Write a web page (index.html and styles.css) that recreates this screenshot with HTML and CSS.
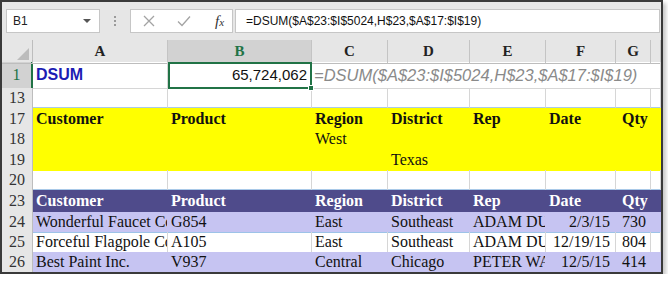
FILE: index.html
```html
<!DOCTYPE html>
<html lang="en">
  <head>
    <meta charset="UTF-8" />
    <title>DSUM</title>
    <link rel="stylesheet" href="styles.css">
  </head>
  <body>
    <div class="frame">
      <div class="fbar">
        <div class="namebox">
          <span>B1</span>
          <span class="caret"></span>
        </div>
        <div class="grip"><i></i><i></i><i></i></div>
        <div class="actions">
          <svg width="12" height="12" viewBox="0 0 12 12"><path d="M1 1 L11 11 M11 1 L1 11" stroke="#a3a3a3" stroke-width="1.3" fill="none"/></svg>
          <svg width="14" height="12" viewBox="0 0 14 12"><path d="M1 6.5 L5 10.5 L13 1.5" stroke="#a3a3a3" stroke-width="1.3" fill="none"/></svg>
          <span class="fx">f<small>x</small></span>
        </div>
        <div class="formula">=DSUM($A$23:$I$5024,H$23,$A$17:$I$19)</div>
      </div>

      <div class="sheet">
        <div class="row colhead">
          <div class="corner"></div>
          <div class="ch">A</div>
          <div class="ch on">B</div>
          <div class="ch">C</div>
          <div class="ch">D</div>
          <div class="ch">E</div>
          <div class="ch">F</div>
          <div class="ch">G</div>
          <div class="ch"></div>
        </div>

        <div class="row r1">
          <div class="rh on">1</div>
          <div class="c dsum">DSUM</div>
          <div class="c sel">65,724,062<span class="handle"></span></div>
          <div class="c ftext">=DSUM($A$23:$I$5024,H$23,$A$17:$I$19)</div>
          <div class="c open"></div>
          <div class="c open"></div>
          <div class="c open"></div>
          <div class="c open"></div>
          <div class="c"></div>
        </div>

        <div class="row h20 gap">
          <div class="rh">13</div>
          <div class="c"></div><div class="c"></div><div class="c"></div><div class="c"></div>
          <div class="c"></div><div class="c"></div><div class="c"></div><div class="c"></div>
        </div>

        <div class="row h21 yellow">
          <div class="rh">17</div>
          <div class="c b">Customer</div>
          <div class="c b">Product</div>
          <div class="c b">Region</div>
          <div class="c b">District</div>
          <div class="c b">Rep</div>
          <div class="c b">Date</div>
          <div class="c b qty">Qty</div>
          <div class="c"></div>
        </div>
        <div class="row h20 yellow">
          <div class="rh">18</div>
          <div class="c"></div><div class="c"></div>
          <div class="c">West</div>
          <div class="c"></div><div class="c"></div><div class="c"></div><div class="c"></div><div class="c"></div>
        </div>
        <div class="row h21 yellow">
          <div class="rh">19</div>
          <div class="c"></div><div class="c"></div><div class="c"></div>
          <div class="c">Texas</div>
          <div class="c"></div><div class="c"></div><div class="c"></div><div class="c"></div>
        </div>

        <div class="row h20 gap">
          <div class="rh">20</div>
          <div class="c"></div><div class="c"></div><div class="c"></div><div class="c"></div>
          <div class="c"></div><div class="c"></div><div class="c"></div><div class="c"></div>
        </div>

        <div class="row h22 thead">
          <div class="rh">23</div>
          <div class="c b">Customer</div>
          <div class="c b">Product</div>
          <div class="c b">Region</div>
          <div class="c b">District</div>
          <div class="c b">Rep</div>
          <div class="c b">Date</div>
          <div class="c b qty">Qty</div>
          <div class="c"></div>
        </div>
        <div class="row h20 band">
          <div class="rh">24</div>
          <div class="c">Wonderful Faucet Co</div>
          <div class="c">G854</div>
          <div class="c">East</div>
          <div class="c">Southeast</div>
          <div class="c">ADAM DUNCAN</div>
          <div class="c num">2/3/15</div>
          <div class="c qty">730</div>
          <div class="c"></div>
        </div>
        <div class="row h20 plain">
          <div class="rh">25</div>
          <div class="c">Forceful Flagpole Co</div>
          <div class="c">A105</div>
          <div class="c">East</div>
          <div class="c">Southeast</div>
          <div class="c">ADAM DUNCAN</div>
          <div class="c num">12/19/15</div>
          <div class="c qty">804</div>
          <div class="c"></div>
        </div>
        <div class="row h20 band last">
          <div class="rh">26</div>
          <div class="c">Best Paint Inc.</div>
          <div class="c">V937</div>
          <div class="c">Central</div>
          <div class="c">Chicago</div>
          <div class="c">PETER WATSON</div>
          <div class="c num">12/5/15</div>
          <div class="c qty">414</div>
          <div class="c"></div>
        </div>
      </div>
    </div>
  </body>
</html>
```

FILE: styles.css
```css
* {
  margin: 0;
  padding: 0;
  box-sizing: border-box;
}

body {
  background: #fff;
  font-family: "Liberation Serif", "Times New Roman", serif;
  color: #111;
}

.frame {
  width: 663px;
  border: 2px solid #3a3a3a;
  box-shadow: 3px 3px 4px rgba(0, 0, 0, 0.22);
  background: #fff;
}

/* formula bar */
.fbar {
  height: 38px;
  background: #e6e6e6;
  display: flex;
  align-items: flex-start;
  padding: 7px 1px 0 4px;
  font-family: "Liberation Sans", Arial, sans-serif;
  font-size: 12px;
}

.namebox {
  width: 94px;
  height: 24px;
  background: #fff;
  border: 1px solid #c6c6c6;
  display: flex;
  align-items: center;
  justify-content: space-between;
  padding: 0 6px 0 6px;
  color: #222;
}

.caret {
  border-left: 4px solid transparent;
  border-right: 4px solid transparent;
  border-top: 4px solid #555;
  margin-right: 2px;
}

.grip {
  width: 30px;
  height: 24px;
  display: flex;
  flex-direction: column;
  align-items: center;
  justify-content: center;
  gap: 2px;
}

.grip i {
  width: 2px;
  height: 2px;
  background: #9a9a9a;
}

.actions {
  width: 103px;
  height: 24px;
  background: #fff;
  border: 1px solid #c6c6c6;
  display: flex;
  align-items: center;
  padding: 0 0 0 12px;
  gap: 22px;
}

.fx {
  font-family: "Liberation Serif", serif;
  font-style: italic;
  font-size: 15px;
  color: #333;
  margin-left: 2px;
}

.fx small {
  font-size: 11px;
}

.formula {
  flex: 1;
  height: 24px;
  margin-left: 2px;
  background: #fff;
  border: 1px solid #c6c6c6;
  padding: 0 10px;
  line-height: 22px;
  color: #111;
}

/* grid */
.row {
  display: grid;
  grid-template-columns: 31px 135px 144px 76px 82px 76px 70px 35px 1fr;
  height: 20px;
  font-size: 16px;
  line-height: 20px;
}

.h20 { height: 20px; line-height: 20px; }
.h21 { height: 21px; line-height: 21px; }
.h22 { height: 22px; line-height: 22px; }

.colhead {
  height: 22px;
  line-height: 22px;
  background: #e6e6e6;
}

.corner {
  border-right: 1px solid #bdbdbd;
  border-bottom: 1px solid #bdbdbd;
  position: relative;
}

.corner::after {
  content: "";
  position: absolute;
  right: 3px;
  bottom: 3px;
  border-left: 12px solid transparent;
  border-bottom: 12px solid #bcbcbc;
}

.ch {
  text-align: center;
  font-weight: bold;
  font-size: 15px;
  color: #222;
  border-right: 1px solid #c4c4c4;
  border-bottom: 1px solid #bdbdbd;
}

.ch.on {
  background: #d2d2d2;
  color: #217346;
  border-bottom: 2px solid #217346;
}

.rh {
  background: #e6e6e6;
  text-align: center;
  color: #333;
  border-right: 1px solid #bdbdbd;
  border-bottom: 1px solid #c6c6c6;
}

.rh.on {
  background: #d2d2d2;
  color: #217346;
  border-right: 2px solid #217346;
}

.c {
  padding: 0 3px;
  white-space: nowrap;
  overflow: hidden;
  border-right: 1px solid #d6d6d6;
  border-bottom: 1px solid #d6d6d6;
}

.b { font-weight: bold; }
.num { text-align: right; padding-right: 5px; }
.qty { padding-left: 6px; }

/* row 1 */
.r1 {
  height: 26px;
  line-height: 26px;
}

.dsum {
  font-family: "Liberation Sans", Arial, sans-serif;
  font-weight: bold;
  color: #1c1cb4;
  font-size: 16px;
}

.sel {
  position: relative;
  overflow: visible;
  text-align: right;
  font-family: "Liberation Sans", Arial, sans-serif;
  font-size: 15px;
  color: #111;
  border: 2px solid #217346;
  padding-right: 3px;
  line-height: 22px;
}

.handle {
  position: absolute;
  right: -4px;
  bottom: -4px;
  width: 6px;
  height: 6px;
  background: #217346;
  border: 1px solid #fff;
}

.ftext {
  overflow: visible;
  border-right: none;
  font-family: "Liberation Sans", Arial, sans-serif;
  font-style: italic;
  font-size: 16.5px;
  color: #8a8a8a;
  padding-left: 2px;
}

.open { border-right: none; }

.gap .c { border-bottom: 2px solid #a9c9e8; }

/* criteria block */
.yellow .c {
  background: #ffff00;
  border-color: #ffff00;
}

/* data table */
.thead .c {
  background: #4f4b8b;
  border-color: #4f4b8b;
  border-bottom-color: #8fb6e0;
  color: #fff;
}

.band .c {
  background: #c6c4f2;
  border-right-color: #c6c4f2;
  border-bottom-color: #9dc3e8;
}

.plain .c {
  border-bottom-color: #9dc3e8;
}

.last .c {
  border-bottom: none;
}

.last .rh {
  border-bottom: none;
}
```
